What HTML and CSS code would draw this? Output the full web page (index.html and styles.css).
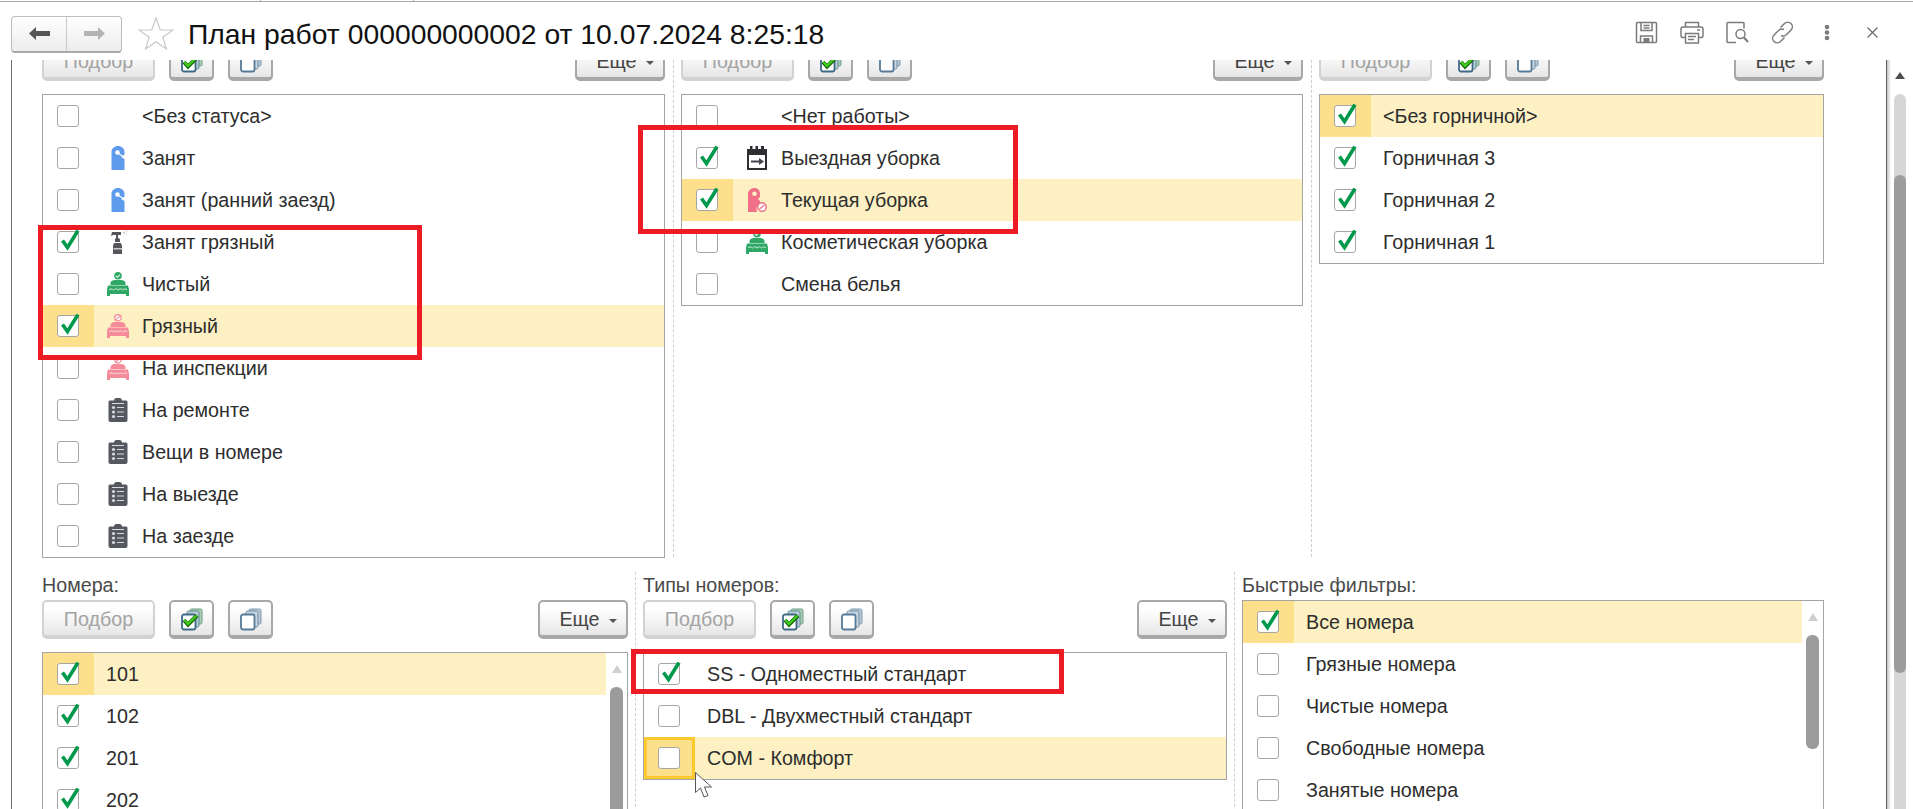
FILE: index.html
```html
<!DOCTYPE html>
<html lang="ru">
<head>
<meta charset="utf-8">
<title>План работ</title>
<link rel="stylesheet" href="styles.css">
</head>
<body>
<svg class="sprite" xmlns="http://www.w3.org/2000/svg">
  <symbol id="ic-check" viewBox="0 0 22 22"><path d="M4.500 10.500 9.500 17.500 20 .5" fill="none" stroke="#00984a" stroke-width="3.600"/></symbol>
  <symbol id="ic-door" viewBox="0 0 24 24"><path fill="#5f9bec" d="M5.500 24V6C5.500 2.500 8.400 0 12 0s6.500 2.500 6.500 6v2c0 1-1 1.700-2 2.300L15 11l3.500 2V24z"/><circle cx="11.500" cy="6.500" r="2.300" fill="#fff"/><path d="M13 8l5.500 3" stroke="#fff" stroke-width="1.400"/></symbol>
  <symbol id="ic-spray" viewBox="0 0 24 24"><path fill="#55565c" d="M6 2h9v3h-3v3l2 1v3H9V9l1-1V5H7L5 6z"/><path fill="#55565c" d="M8 13h7l1 3v8H7v-8z"/><path fill="#c9c9cb" d="M7.500 18h8.500v1.500H7.500z"/><circle cx="18" cy="2.500" r="1" fill="#bdbdbd"/><circle cx="20.500" cy="1" r=".8" fill="#cfcfcf"/><circle cx="20.500" cy="4" r=".8" fill="#cfcfcf"/></symbol>
  <symbol id="ic-bed-green" viewBox="0 0 24 24"><circle cx="12" cy="3.800" r="3.800" fill="#2fa866"/><path d="M10 3.800l1.500 1.500 2.600-2.800" fill="none" stroke="#fff" stroke-width="1.100"/><path fill="#2fa866" d="M4.500 13v-2c0-2 2.500-3 4.500-3h6c2 0 4.500 1 4.500 3v2zM2 13.500h20l1 4V24h-3v-2H4v2H1v-6.500z"/><path d="M3 18c1.200-1.500 2.800-1.500 4.500 0 1.200-1.500 3-1.500 4.500 0 1.500-1.500 3.300-1.500 4.500 0 1.700-1.500 3.300-1.500 4.500 0" fill="none" stroke="#cdeeda" stroke-width="1"/></symbol>
  <symbol id="ic-bed-pink" viewBox="0 0 24 24"><circle cx="12" cy="3.800" r="3.200" fill="#fff" stroke="#f58a98" stroke-width="1.300"/><path d="M10 5.800l4-4" stroke="#f58a98" stroke-width="1.100"/><path fill="#f58a98" d="M4.500 13v-2c0-2 2.500-3 4.500-3h6c2 0 4.500 1 4.500 3v2zM2 13.500h20l1 4V24h-3v-2H4v2H1v-6.500z"/><path d="M3 18c1.200-1.500 2.800-1.500 4.500 0 1.200-1.500 3-1.500 4.500 0 1.500-1.500 3.300-1.500 4.500 0 1.700-1.500 3.300-1.500 4.500 0" fill="none" stroke="#fde0e4" stroke-width="1"/></symbol>
  <symbol id="ic-clip" viewBox="0 0 24 24"><path fill="#55585f" d="M8 2.500c0-1.400 1-2.500 2.400-2.500h3.200C15 0 16 1.100 16 2.500h4c1.100 0 1.500.8 1.500 2V22c0 1.200-.8 2-2 2h-15c-1.200 0-2-.8-2-2V4.500c0-1.200.4-2 1.500-2z"/><path fill="none" stroke="#d9dade" stroke-width="1" d="M6 5.500h12M11 9.500h7M11 14h7M11 18.500h7"/><circle cx="7.500" cy="9.500" r="1.600" fill="#d9dade"/><circle cx="7.500" cy="14" r="1.600" fill="#d9dade"/><circle cx="7.500" cy="18.500" r="1.600" fill="#d9dade"/></symbol>
  <symbol id="ic-cal" viewBox="0 0 24 24"><path fill="#2e2e33" d="M2 3h3V0h2.500v3h3V0h2.500v3h3V0H19v3h3v21H2z"/><path fill="#fff" d="M4 9h16v13H4z"/><path fill="#44474c" d="M6 14.500h8V12l5 3.500-5 3.500v-2.500H6z"/></symbol>
  <symbol id="ic-hang" viewBox="0 0 24 24"><path fill-rule="evenodd" fill="#f0708a" d="M9.500 0c3.500 0 5.500 2.500 5.500 5.500V9l-2 2 2 2v2.500c-2.500 1-4 3.500-3.500 6.500l.5 2H3V5.500C3 2.500 6 0 9.500 0zm0 3.400a2.300 2.300 0 1 0 0 4.600 2.300 2.300 0 0 0 0-4.600z"/><circle cx="17" cy="19" r="4.300" fill="#fff" stroke="#f0708a" stroke-width="1.500"/><path d="M14.500 21l5-4" stroke="#f0708a" stroke-width="1.300"/></symbol>
  <symbol id="ic-stack" viewBox="0 0 22 23"><rect x="9" y="1" width="12" height="15" rx="1.500" fill="#b7c8d6" stroke="#7f9ab0"/><rect x="6" y="3" width="12" height="16" rx="1.500" fill="#c9d6e0" stroke="#6f8ca4"/><rect x="1" y="6.500" width="13.500" height="15" rx="2" fill="#fff" stroke="#567a97" stroke-width="1.800"/></symbol>
  <symbol id="ic-stackcheck" viewBox="0 0 22 23"><rect x="9" y="1" width="12" height="15" rx="1.500" fill="#a9cdb0" stroke="#6f9f86"/><rect x="6" y="3" width="12" height="16" rx="1.500" fill="#b9cdd6" stroke="#5f8a94"/><rect x="1" y="6.500" width="13.500" height="15" rx="2" fill="#fff" stroke="#3f6a87" stroke-width="1.800"/><path d="M3 12l4 4.500 9-9" fill="none" stroke="#1c6b10" stroke-width="4"/><path d="M3.500 12l3.500 4 8.500-8.500" fill="none" stroke="#41d11c" stroke-width="2"/></symbol>
</svg>

<div class="tabs"><span class="tab tab-a"></span><span class="tab tab-b"></span></div>

<header class="header">
  <div class="nav">
    <span class="nav-btn"><svg width="21" height="13" viewBox="0 0 21 13"><path fill="#565656" d="M0 6.500 7 0v4h14v5H7v4z"/></svg></span>
    <span class="nav-btn"><svg width="21" height="13" viewBox="0 0 21 13"><path fill="#b4b4b4" d="M21 6.500 14 0v4H0v5h14v4z"/></svg></span>
  </div>
  <svg class="star" width="36" height="33" viewBox="0 0 36 33"><path fill="#fff" stroke="#c9c9c9" stroke-width="1.200" d="M18 1l4.300 12H35l-10.200 7.300L28.500 32 18 24.800 7.500 32l3.700-11.700L1 13h12.700z"/></svg>
  <h1 class="title">План работ 000000000002 от 10.07.2024 8:25:18</h1>
  <div class="tools">
    <svg class="tool" width="23" height="23" viewBox="0 0 23 23" fill="none" stroke="#7b7b7b" stroke-width="1.500"><path d="M2.500 1.500h18a1 1 0 0 1 1 1v18a1 1 0 0 1-1 1h-18a1 1 0 0 1-1-1v-18a1 1 0 0 1 1-1z"/><path d="M6 1.500v8h11v-8M8.500 4.500h6M8.500 7h6M5.500 21.500v-6.500h12v6.500"/><path fill="#7b7b7b" stroke="none" d="M8.500 17h6v4.500h-6z"/></svg>
    <svg class="tool" width="24" height="23" viewBox="0 0 24 23" fill="none" stroke="#7b7b7b" stroke-width="1.500"><path d="M5.500 6V1.500h13V6M5 16.500H2.500a1.500 1.500 0 0 1-1.500-1.500V8a2 2 0 0 1 2-2h18a2 2 0 0 1 2 2v7a1.500 1.500 0 0 1-1.500 1.500H19"/><path d="M5.500 12.500h13v9.500h-13zM8 15.500h8M8 18.500h6M17 9h3"/></svg>
    <svg class="tool" width="23" height="23" viewBox="0 0 23 23" fill="none" stroke="#7b7b7b" stroke-width="1.500"><path d="M10 21.500H2a1 1 0 0 1-1-1v-18a1 1 0 0 1 1-1h15a1 1 0 0 1 1 1v5"/><circle cx="14.500" cy="13" r="4.500"/><path stroke-width="2" d="M18 16.500l4 4.500"/></svg>
    <svg class="tool" width="23" height="23" viewBox="0 0 23 23" fill="none" stroke="#7b7b7b" stroke-width="1.500"><path d="M9.500 6.500 13.500 2.500a4.500 4.500 0 0 1 6.500 6.500l-5 5a4.500 4.500 0 0 1-5 .5"/><path d="M13.500 16.500l-4 4a4.500 4.500 0 0 1-6.500-6.500l5-5a4.500 4.500 0 0 1 5-.5"/></svg>
    <svg class="tool tool-dots" width="6" height="17" viewBox="0 0 6 17" fill="#7b7b7b"><circle cx="3" cy="3" r="2.300"/><circle cx="3" cy="8.500" r="2.300"/><circle cx="3" cy="14" r="2.300"/></svg>
    <svg class="tool tool-close" width="11" height="11" viewBox="0 0 11 11" stroke="#666" stroke-width="1.100"><path d="M.5.500l10 10M10.500.500l-10 10"/></svg>
  </div>
</header>

<main class="body">
  <div class="form">
    <section class="band band-top">
      <div class="pane pane-status">
        <div class="bar">
          <button class="btn btn-pick">Подбор</button>
          <button class="btn btn-ic"><svg width="22" height="23"><use href="#ic-stackcheck"/></svg></button>
          <button class="btn btn-ic"><svg width="22" height="23"><use href="#ic-stack"/></svg></button>
          <button class="btn btn-more">Еще<i class="caret"></i></button>
        </div>
        <div class="box">
          <div class="rows">
            <div class="row"><span class="cell"><span class="cb"></span></span><span class="ico"></span><span class="txt">&lt;Без статуса&gt;</span></div>
            <div class="row"><span class="cell"><span class="cb"></span></span><svg class="ico"><use href="#ic-door"/></svg><span class="txt">Занят</span></div>
            <div class="row"><span class="cell"><span class="cb"></span></span><svg class="ico"><use href="#ic-door"/></svg><span class="txt">Занят (ранний заезд)</span></div>
            <div class="row"><span class="cell"><span class="cb"><svg class="tick"><use href="#ic-check"/></svg></span></span><svg class="ico"><use href="#ic-spray"/></svg><span class="txt">Занят грязный</span></div>
            <div class="row"><span class="cell"><span class="cb"></span></span><svg class="ico"><use href="#ic-bed-green"/></svg><span class="txt">Чистый</span></div>
            <div class="row row-on"><span class="cell"><span class="cb"><svg class="tick"><use href="#ic-check"/></svg></span></span><svg class="ico"><use href="#ic-bed-pink"/></svg><span class="txt">Грязный</span></div>
            <div class="row"><span class="cell"><span class="cb"></span></span><svg class="ico"><use href="#ic-bed-pink"/></svg><span class="txt">На инспекции</span></div>
            <div class="row"><span class="cell"><span class="cb"></span></span><svg class="ico"><use href="#ic-clip"/></svg><span class="txt">На ремонте</span></div>
            <div class="row"><span class="cell"><span class="cb"></span></span><svg class="ico"><use href="#ic-clip"/></svg><span class="txt">Вещи в номере</span></div>
            <div class="row"><span class="cell"><span class="cb"></span></span><svg class="ico"><use href="#ic-clip"/></svg><span class="txt">На выезде</span></div>
            <div class="row"><span class="cell"><span class="cb"></span></span><svg class="ico"><use href="#ic-clip"/></svg><span class="txt">На заезде</span></div>
          </div>
        </div>
      </div>
      <div class="sep sep-1"></div>
      <div class="pane pane-work">
        <div class="bar">
          <button class="btn btn-pick">Подбор</button>
          <button class="btn btn-ic"><svg width="22" height="23"><use href="#ic-stackcheck"/></svg></button>
          <button class="btn btn-ic"><svg width="22" height="23"><use href="#ic-stack"/></svg></button>
          <button class="btn btn-more">Еще<i class="caret"></i></button>
        </div>
        <div class="box">
          <div class="rows">
            <div class="row"><span class="cell"><span class="cb"></span></span><span class="ico"></span><span class="txt">&lt;Нет работы&gt;</span></div>
            <div class="row"><span class="cell"><span class="cb"><svg class="tick"><use href="#ic-check"/></svg></span></span><svg class="ico"><use href="#ic-cal"/></svg><span class="txt">Выездная уборка</span></div>
            <div class="row row-on"><span class="cell"><span class="cb"><svg class="tick"><use href="#ic-check"/></svg></span></span><svg class="ico"><use href="#ic-hang"/></svg><span class="txt">Текущая уборка</span></div>
            <div class="row"><span class="cell"><span class="cb"></span></span><svg class="ico"><use href="#ic-bed-green"/></svg><span class="txt">Косметическая уборка</span></div>
            <div class="row"><span class="cell"><span class="cb"></span></span><span class="ico"></span><span class="txt">Смена белья</span></div>
          </div>
        </div>
      </div>
      <div class="sep sep-2"></div>
      <div class="pane pane-maid">
        <div class="bar">
          <button class="btn btn-pick">Подбор</button>
          <button class="btn btn-ic"><svg width="22" height="23"><use href="#ic-stackcheck"/></svg></button>
          <button class="btn btn-ic"><svg width="22" height="23"><use href="#ic-stack"/></svg></button>
          <button class="btn btn-more">Еще<i class="caret"></i></button>
        </div>
        <div class="box">
          <div class="rows">
            <div class="row row-on"><span class="cell"><span class="cb"><svg class="tick"><use href="#ic-check"/></svg></span></span><span class="txt">&lt;Без горничной&gt;</span></div>
            <div class="row"><span class="cell"><span class="cb"><svg class="tick"><use href="#ic-check"/></svg></span></span><span class="txt">Горничная 3</span></div>
            <div class="row"><span class="cell"><span class="cb"><svg class="tick"><use href="#ic-check"/></svg></span></span><span class="txt">Горничная 2</span></div>
            <div class="row"><span class="cell"><span class="cb"><svg class="tick"><use href="#ic-check"/></svg></span></span><span class="txt">Горничная 1</span></div>
          </div>
        </div>
      </div>
    </section>

    <section class="band band-bottom">
      <div class="pane pane-rooms">
        <div class="label">Номера:</div>
        <div class="bar">
          <button class="btn btn-pick">Подбор</button>
          <button class="btn btn-ic"><svg width="22" height="23"><use href="#ic-stackcheck"/></svg></button>
          <button class="btn btn-ic"><svg width="22" height="23"><use href="#ic-stack"/></svg></button>
          <button class="btn btn-more">Еще<i class="caret"></i></button>
        </div>
        <div class="box">
          <div class="rows">
            <div class="row row-on"><span class="cell"><span class="cb"><svg class="tick"><use href="#ic-check"/></svg></span></span><span class="txt">101</span></div>
            <div class="row"><span class="cell"><span class="cb"><svg class="tick"><use href="#ic-check"/></svg></span></span><span class="txt">102</span></div>
            <div class="row"><span class="cell"><span class="cb"><svg class="tick"><use href="#ic-check"/></svg></span></span><span class="txt">201</span></div>
            <div class="row"><span class="cell"><span class="cb"><svg class="tick"><use href="#ic-check"/></svg></span></span><span class="txt">202</span></div>
          </div>
          <div class="lscroll"><i class="arrow arrow-light"></i><i class="lthumb lthumb-long"></i></div>
        </div>
      </div>
      <div class="sep sep-3"></div>
      <div class="pane pane-types">
        <div class="label">Типы номеров:</div>
        <div class="bar">
          <button class="btn btn-pick">Подбор</button>
          <button class="btn btn-ic"><svg width="22" height="23"><use href="#ic-stackcheck"/></svg></button>
          <button class="btn btn-ic"><svg width="22" height="23"><use href="#ic-stack"/></svg></button>
          <button class="btn btn-more">Еще<i class="caret"></i></button>
        </div>
        <div class="box">
          <div class="rows">
            <div class="row"><span class="cell"><span class="cb"><svg class="tick"><use href="#ic-check"/></svg></span></span><span class="txt">SS - Одноместный стандарт</span></div>
            <div class="row"><span class="cell"><span class="cb"></span></span><span class="txt">DBL - Двухместный стандарт</span></div>
            <div class="row row-on"><span class="cell cell-focus"><span class="cb"></span></span><span class="txt">COM - Комфорт</span></div>
          </div>
        </div>
      </div>
      <div class="sep sep-3"></div>
      <div class="pane pane-quick">
        <div class="label">Быстрые фильтры:</div>
        <div class="box">
          <div class="rows">
            <div class="row row-on"><span class="cell"><span class="cb"><svg class="tick"><use href="#ic-check"/></svg></span></span><span class="txt">Все номера</span></div>
            <div class="row"><span class="cell"><span class="cb"></span></span><span class="txt">Грязные номера</span></div>
            <div class="row"><span class="cell"><span class="cb"></span></span><span class="txt">Чистые номера</span></div>
            <div class="row"><span class="cell"><span class="cb"></span></span><span class="txt">Свободные номера</span></div>
            <div class="row"><span class="cell"><span class="cb"></span></span><span class="txt">Занятые номера</span></div>
          </div>
          <div class="lscroll lscroll-track"><i class="arrow arrow-light"></i><i class="lthumb lthumb-short"></i></div>
        </div>
      </div>
    </section>
  </div>
  <aside class="vscroll"><i class="arrow arrow-dark"></i><div class="vtrack"><i class="vthumb"></i></div></aside>
</main>

<div class="mark mark-1"></div>
<div class="mark mark-2"></div>
<div class="mark mark-3"></div>
<svg class="cursor" width="18" height="27" viewBox="0 0 18 27"><path fill="#fff" stroke="#555" stroke-width="1" d="M.5.500v20l5-4.500 3.500 9 4-1.500-3.500-8.500h7z"/></svg>
</body>
</html>
```

FILE: styles.css
```css
* { box-sizing: border-box; }
html, body { margin: 0; padding: 0; }
body {
  position: relative;
  width: 1913px;
  height: 809px;
  overflow: hidden;
  background: #fff;
  font-family: "Liberation Sans", Arial, sans-serif;
  color: #2d2d2d;
}
.sprite { display: none; }

.tabs { display: flex; height: 2px; border-bottom: 1px solid #a9a9a9; }
.tab { height: 1px; border-right: 1px solid #a9a9a9; }
.tab-a { width: 261px; }
.tab-b { width: 153px; }

.header { display: flex; align-items: center; height: 58px; padding-left: 11px; }
.nav {
  display: flex;
  width: 111px;
  height: 37px;
  margin-top: 6px;
  border: 1px solid #bdbdbd;
  border-bottom: 2px solid #a9a9a9;
  border-radius: 4px;
  background: linear-gradient(#fff, #ececec);
}
.nav-btn { display: flex; align-items: center; justify-content: center; flex: 1; }
.nav-btn + .nav-btn { border-left: 1px solid #c8c8c8; }
.star { margin: 5px 0 0 16px; flex: none; }
.title { margin: 5px 0 0 14px; font-size: 28.3px; font-weight: 400; color: #111; white-space: nowrap; line-height: 36px; }
.tools { display: flex; align-items: center; margin: 2px 0 0 auto; padding-right: 35px; }
.tool { display: block; margin-left: 22px; flex: none; }
.tool-dots { margin-left: 30px; }
.tool-close { margin-left: 37px; }

.body { display: flex; height: 749px; overflow: hidden; }
.form {
  width: 1876px;
  margin-left: 11px;
  padding-left: 30px;
  border-left: 1px solid #6e6e6e;
  border-right: 1px solid #5e5e5e;
  flex: none;
}
.band { display: flex; }
.band-top { height: 512px; align-items: stretch; }
.band-bottom { height: 260px; }
.band-top .bar { margin-top: -18px; }

.pane { flex: none; }
.pane-status { width: 623px; }
.pane-work { width: 622px; }
.pane-maid { width: 505px; }
.pane-rooms { width: 586px; }
.pane-types { width: 584px; }
.pane-quick { width: 582px; }

.sep { width: 1px; border-left: 1px dashed #cfcfcf; flex: none; }
.sep-1 { margin: 0 7px 0 8px; height: 497px; }
.sep-2 { margin: 0 7px 0 8px; height: 497px; }
.sep-3 { margin: 0 7px; }

.label { height: 28px; padding-top: 1px; font-size: 19.7px; line-height: 24px; color: #4a4a4a; }

.bar { display: flex; height: 39px; margin-bottom: 13px; }
.btn {
  display: flex;
  align-items: center;
  justify-content: center;
  height: 39px;
  padding: 2px 0 0;
  border: 2px solid #a8a8a8;
  border-bottom-width: 4px;
  border-radius: 5px;
  background: linear-gradient(#fff 20%, #e6e6e6);
  font: 19.7px "Liberation Sans", Arial, sans-serif;
  color: #444;
}
.btn-pick { width: 113px; margin-right: 14px; border-color: #d2d2d2; color: #a3a3a3; }
.btn-ic { width: 45px; margin-right: 14px; }
.btn-more { width: 90px; margin-left: auto; gap: 9px; padding-left: 10px; }
.caret { width: 0; height: 0; margin-top: 3px; border: 4px solid transparent; border-top: 4px solid #555; border-bottom: 0; }

.box { display: flex; border: 1px solid #a4a4a4; }
.rows { flex: 1; min-width: 0; }
.row { display: flex; align-items: center; height: 42px; }
.row-on { background: #fdf1c4; }
.cell { display: flex; align-items: center; width: 51px; height: 42px; padding-left: 14px; flex: none; }
.row-on .cell { background: #fde08c; }
.cell-focus { padding-left: 11px; border: 3px solid #fdc92f; }
.cb { display: block; width: 22px; height: 22px; border: 1px solid #a6a6a6; border-radius: 3px; background: #fff; flex: none; }
.tick { display: block; width: 22px; height: 22px; margin: -2px 0 0 0; overflow: visible; }
.ico { display: block; width: 24px; height: 24px; margin-left: 12px; flex: none; }
.txt { margin-left: 12px; font-size: 19.7px; line-height: 24px; white-space: nowrap; }

.lscroll { display: flex; flex-direction: column; align-items: center; width: 21px; flex: none; }
.lscroll-track { position: relative; }
.arrow { display: block; width: 0; height: 0; border: 5px solid transparent; border-top: 0; flex: none; }
.arrow-light { margin-top: 12px; border-bottom: 8px solid #cfcfcf; }
.lthumb { display: block; width: 13px; margin-top: 14px; background: #9b9b9b; border-radius: 6px; flex: none; }
.lthumb-long { height: 180px; }
.lthumb-short { height: 114px; }

.vscroll { display: flex; flex-direction: column; align-items: center; width: 26px; background: linear-gradient(90deg, #c4c4c4, #fff 4px); flex: none; }
.arrow-dark { margin-top: 12px; border-bottom: 7px solid #4d4d4d; }
.vtrack { width: 12px; margin-top: 15px; flex: 1; padding-top: 81px; background: #d6d6d6; border-radius: 6px 6px 0 0; }
.vthumb { display: block; height: 498px; background: #9c9c9c; border-radius: 6px; }

.mark { position: absolute; border: 5px solid #ed1c24; }
.mark-1 { left: 38px; top: 225px; width: 384px; height: 135px; }
.mark-2 { left: 638px; top: 125px; width: 380px; height: 109px; }
.mark-3 { left: 631px; top: 649px; width: 433px; height: 45px; }
.cursor { position: absolute; left: 695px; top: 772px; }
```
